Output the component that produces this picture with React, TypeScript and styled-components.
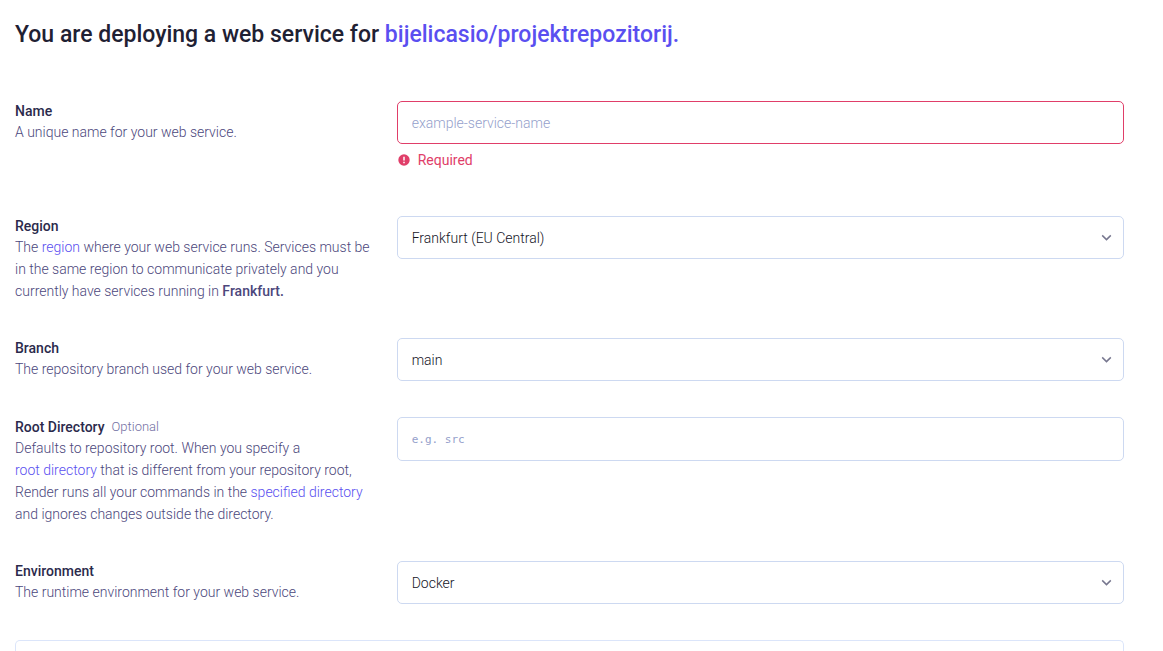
import React, { useState } from "react";
import styled, { createGlobalStyle } from "styled-components";

const GlobalStyle = createGlobalStyle`
  *, *::before, *::after { box-sizing: border-box; }
  body {
    margin: 0;
    background: #ffffff;
    color: #4c477c;
    font-family: Roboto, "Liberation Sans", sans-serif;
    font-size: 14px;
    font-weight: 300;
    line-height: 22px;
  }
`;

const Page = styled.main`
  display: flex;
  flex-direction: column;
  min-height: 100vh;
  padding: 19px 39px 0 15px;
`;

const Title = styled.h1`
  margin: 0 0 50px;
  color: #1f2133;
  font-size: 23px;
  font-weight: 500;
  line-height: 32px;
`;

const Link = styled.a`
  color: #5a4ff0;
  text-decoration: none;
  white-space: nowrap;
`;

const Form = styled.form`
  display: flex;
  flex: 1;
  flex-direction: column;
  gap: 36px;
`;

const Row = styled.div`
  display: grid;
  grid-template-columns: minmax(0, 1fr) minmax(0, 2fr);
  column-gap: 18px;
`;

const LabelLine = styled.div`
  display: flex;
  align-items: center;
  gap: 7px;
  line-height: 20px;
`;

const Label = styled.label`
  color: #2b2a4c;
  font-weight: 500;
`;

const Optional = styled.span`
  color: #7370a3;
  font-size: 13px;
`;

const Description = styled.p`
  margin: 0;
`;

const Strong = styled.strong`
  font-weight: 500;
`;

const TextInput = styled.input<{ $invalid?: boolean; $mono?: boolean }>`
  display: block;
  width: 100%;
  height: ${(p) => (p.$mono ? "44px" : "43px")};
  padding: 0 14px;
  border: 1px solid ${(p) => (p.$invalid ? "#e03e69" : "#cdd9f1")};
  border-radius: 5px;
  outline: none;
  background: #ffffff;
  color: #20222e;
  font-family: ${(p) => (p.$mono ? '"DejaVu Sans Mono", monospace' : "inherit")};
  font-size: ${(p) => (p.$mono ? "11px" : "14px")};
  font-weight: 300;

  &::placeholder {
    color: #959fcb;
    opacity: 1;
  }
`;

const ErrorText = styled.p`
  display: flex;
  align-items: center;
  gap: 8px;
  margin: 5px 0 0;
  padding: 0 0 9px 1px;
  color: #e03e69;
  font-weight: 400;
`;

const SelectBox = styled.div`
  position: relative;
`;

const SelectInput = styled.select`
  display: block;
  width: 100%;
  height: 43px;
  padding: 0 40px 0 14px;
  border: 1px solid #cdd9f1;
  border-radius: 5px;
  appearance: none;
  background: #ffffff;
  color: #14151f;
  font: inherit;
`;

const Chevron = styled.svg`
  position: absolute;
  top: 16px;
  right: 12px;
  pointer-events: none;
`;

const NextPanel = styled.section`
  flex: 1;
  min-height: 10px;
  border: 1px solid #dbe5fa;
  border-bottom: 0;
  border-radius: 5px 5px 0 0;
`;

function ErrorIcon() {
  return (
    <svg width="12" height="12" viewBox="0 0 12 12" aria-hidden="true">
      <circle cx="6" cy="6" r="5.7" fill="#e03e69" />
      <path d="M6 2.8v3.8" stroke="#fff" strokeWidth="1.5" />
      <path d="M6 7.8v1.4" stroke="#fff" strokeWidth="1.5" />
    </svg>
  );
}

function Select({ id, options }: { id: string; options: string[] }) {
  return (
    <SelectBox>
      <SelectInput id={id} defaultValue={options[0]}>
        {options.map((option) => (
          <option key={option}>{option}</option>
        ))}
      </SelectInput>
      <Chevron width="11" height="11" viewBox="0 0 11 11" aria-hidden="true">
        <path d="M1.2 3.4l4.3 4.2 4.3-4.2" fill="none" stroke="#77778f" strokeWidth="1.5" />
      </Chevron>
    </SelectBox>
  );
}

interface FieldProps {
  id: string;
  label: string;
  optional?: boolean;
  description: React.ReactNode;
  children: React.ReactNode;
}

function Field({ id, label, optional, description, children }: FieldProps) {
  return (
    <Row>
      <div>
        <LabelLine>
          <Label htmlFor={id}>{label}</Label>
          {optional && <Optional>Optional</Optional>}
        </LabelLine>
        <Description>{description}</Description>
      </div>
      <div>{children}</div>
    </Row>
  );
}

export default function App() {
  const [name, setName] = useState("");

  return (
    <>
      <GlobalStyle />
      <Page>
        <Title>
          You are deploying a web service for <Link href="#repository">bijelicasio/projektrepozitorij.</Link>
        </Title>
        <Form>
          <Field id="name" label="Name" description="A unique name for your web service.">
            <TextInput
              id="name"
              $invalid={!name}
              placeholder="example-service-name"
              value={name}
              onChange={(event) => setName(event.target.value)}
            />
            {!name && (
              <ErrorText>
                <ErrorIcon />
                Required
              </ErrorText>
            )}
          </Field>
          <Field
            id="region"
            label="Region"
            description={
              <>
                The <Link href="#region-docs">region</Link> where your web service runs. Services must be in the same
                region to communicate privately and you currently have services running in <Strong>Frankfurt.</Strong>
              </>
            }
          >
            <Select id="region" options={["Frankfurt (EU Central)"]} />
          </Field>
          <Field id="branch" label="Branch" description="The repository branch used for your web service.">
            <Select id="branch" options={["main"]} />
          </Field>
          <Field
            id="root"
            label="Root Directory"
            optional
            description={
              <>
                Defaults to repository root. When you specify a <Link href="#root-docs">root directory</Link> that is
                different from your repository root, Render runs all your commands in the{" "}
                <Link href="#directory-docs">specified directory</Link> and ignores changes outside the directory.
              </>
            }
          >
            <TextInput id="root" $mono placeholder="e.g. src" />
          </Field>
          <Field id="environment" label="Environment" description="The runtime environment for your web service.">
            <Select id="environment" options={["Docker"]} />
          </Field>
          <NextPanel />
        </Form>
      </Page>
    </>
  );
}
